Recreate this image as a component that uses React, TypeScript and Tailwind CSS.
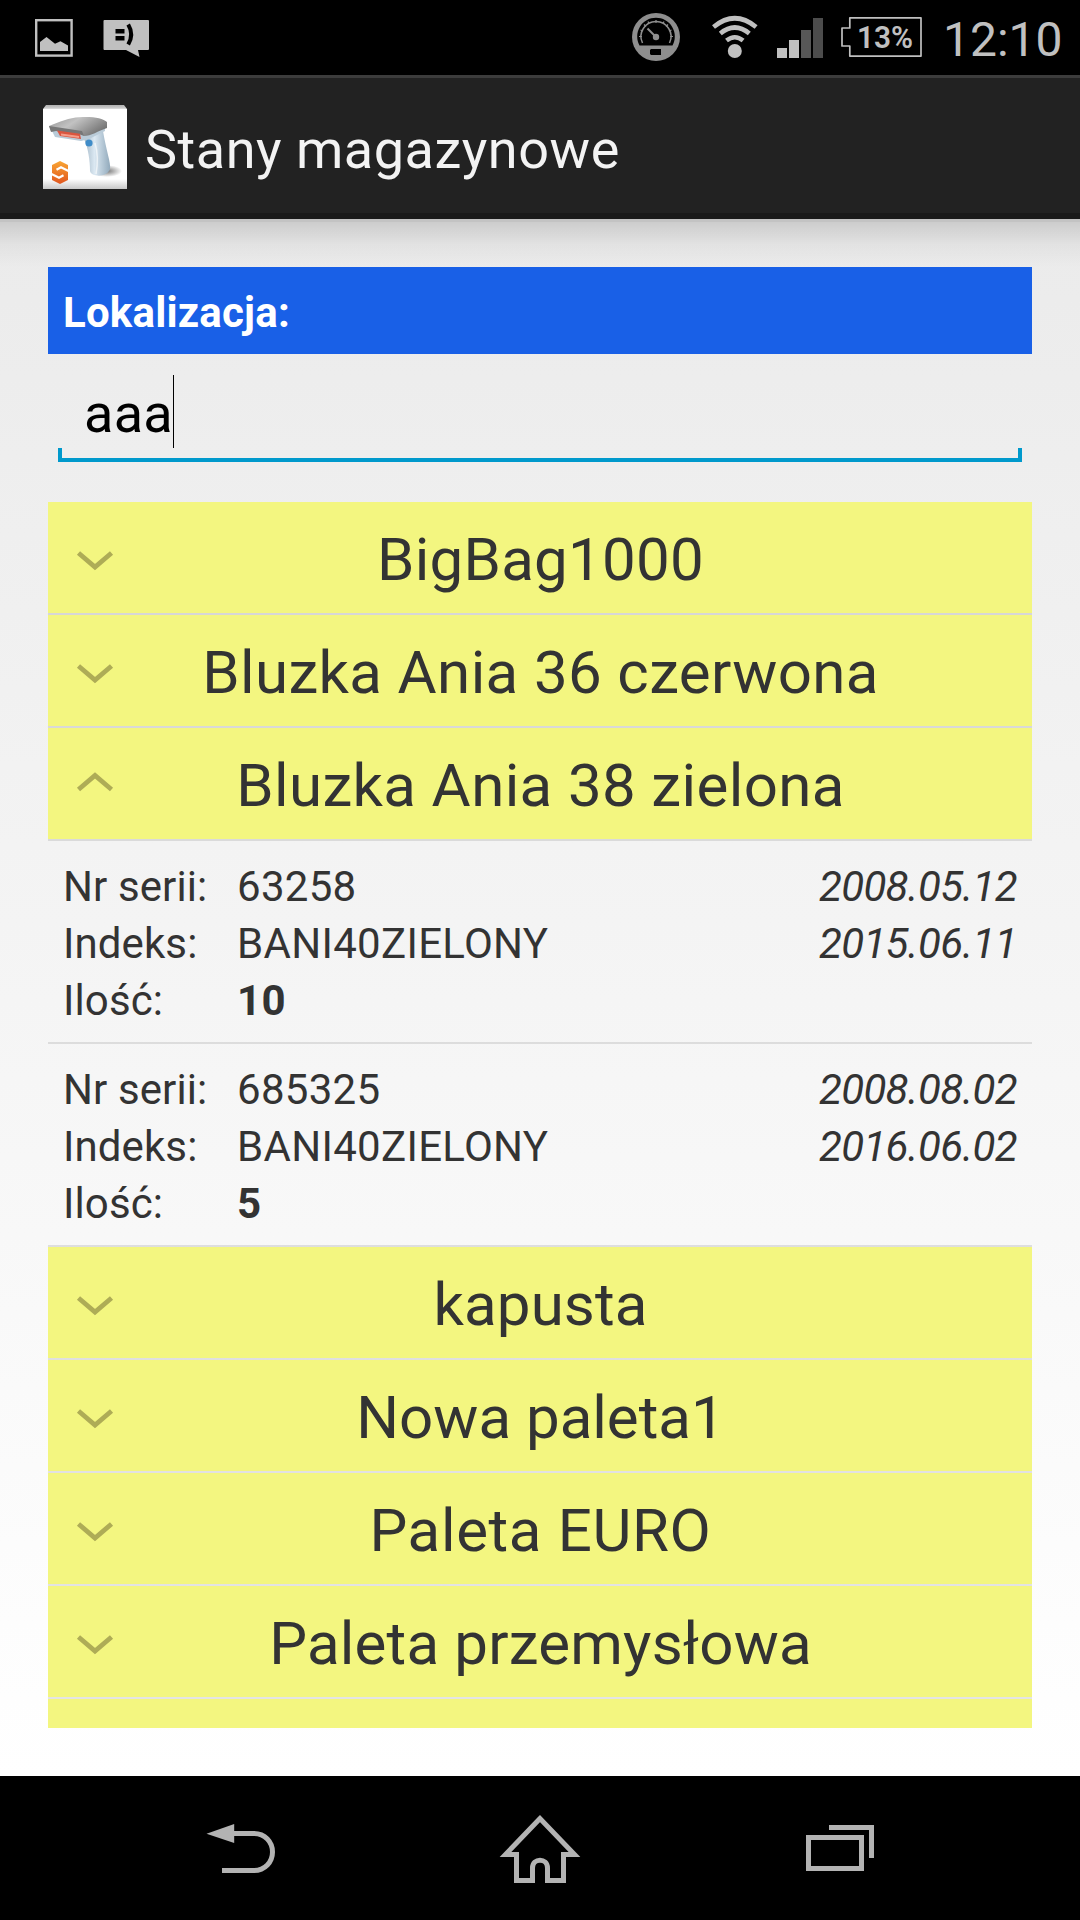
import type { ReactNode } from 'react'

type Seria = { nr: string; indeks: string; ilosc: number; od: string; do: string }
type Towar = { nazwa: string; tracking?: string; serie?: Seria[] }

const towary: Towar[] = [
  { nazwa: 'BigBag1000', tracking: 'tracking-[0.25px]' },
  { nazwa: 'Bluzka Ania 36 czerwona', tracking: 'tracking-[0.38px]' },
  {
    nazwa: 'Bluzka Ania 38 zielona',
    tracking: 'tracking-[0.38px]',
    serie: [
      { nr: '63258', indeks: 'BANI40ZIELONY', ilosc: 10, od: '2008.05.12', do: '2015.06.11' },
      { nr: '685325', indeks: 'BANI40ZIELONY', ilosc: 5, od: '2008.08.02', do: '2016.06.02' },
    ],
  },
  { nazwa: 'kapusta', tracking: 'tracking-[0.15px]' },
  { nazwa: 'Nowa paleta1' },
  { nazwa: 'Paleta EURO', tracking: 'tracking-[0.65px]' },
  { nazwa: 'Paleta przemysłowa', tracking: 'tracking-[0.2px]' },
]

function StatusBar() {
  return (
    <div className="flex h-[75px] shrink-0 items-center justify-between bg-black">
      <svg className="h-[75px] w-[160px]" viewBox="0 0 160 75" fill="#c0c0c0">
        <rect x="36.2" y="20.2" width="35.4" height="35.4" fill="none" stroke="#c0c0c0" strokeWidth="2.4" />
        <path d="M40 51V42L46.5 37L55 43.7L60.5 41.3L68 45.5V51Z" />
        <path d="M104.5 20H148a1 1 0 0 1 1 1V49a1 1 0 0 1-1 1H138L139.5 57L126 50H104.5a1 1 0 0 1-1-1V21a1 1 0 0 1 1-1Z" />
        <path d="M115.5 29h9v4.5h-9zM115.5 36h9v4.5h-9z" fill="#000" />
        <path d="M128.2 24.5Q134.2 34.5 128.2 44.5" fill="none" stroke="#000" strokeWidth="4" />
      </svg>
      <div className="flex items-center">
        <svg className="h-[75px] w-[325px]" viewBox="620 0 325 75">
          {/* speedometer */}
          <circle cx="656" cy="37" r="24" fill="#8e8e8e" />
          <path d="M639.5 45.5A18.8 18.8 0 1 1 672.5 45.5Z" fill="#000" />
          <path d="M642.5 43A15 15 0 1 1 669.5 43" fill="none" stroke="#8e8e8e" strokeWidth="1.5" />
          <path d="M639 36.5h3M673 36.5h-3M656 20v3M644 24.5l2 2.2M668 24.5l-2 2.2M648 21.5l1 2M664 21.5l-1 2M640.5 30l2.5 1M671.5 30l-2.5 1" stroke="#8e8e8e" strokeWidth="1.2" />
          <circle cx="656" cy="37" r="3.2" fill="#8e8e8e" />
          <path d="M647.5 28.5L656 37" stroke="#8e8e8e" strokeWidth="2" />
          <path d="M651 49h10v6h-10l-1-1v-4z" fill="#000" />
          {/* wifi */}
          <circle cx="734.8" cy="51" r="7" fill="#c0c0c0" />
          <path d="M713.5 27Q734.8 9.5 756.1 27M720.3 33.5Q734.8 21.5 749.3 33.5M726.5 40.5Q734.8 34 743.1 40.5" fill="none" stroke="#c0c0c0" strokeWidth="4.6" />
          {/* signal */}
          <path d="M777 48h10v10h-10zM789 40h10v18h-10z" fill="#c0c0c0" />
          <path d="M801 30h10v28h-10z" fill="#575757" />
          <path d="M813 18h10v40h-10z" fill="#4c4c4c" />
          {/* battery */}
          <path d="M849.8 17.9H921V56.1H849.8V46H842V28H849.8Z" fill="none" stroke="#c0c0c0" strokeWidth="1.7" strokeLinejoin="round" />
          <text x="857" y="48" fontSize="31" fontWeight="600" textLength="56" lengthAdjust="spacingAndGlyphs" fill="#c0c0c0">13%</text>
        </svg>
        <span className="mt-[3px] w-[135px] -indent-[2px] text-[48px] leading-[75px] text-[#c0c0c0]">12:10</span>
      </div>
    </div>
  )
}

function AppIcon() {
  return (
    <svg className="mt-0.5 h-[84px] w-[84px] shrink-0" viewBox="0 0 84 84">
      <defs>
        <linearGradient id="tlo" x1="0" y1="0" x2="0" y2="1">
          <stop offset="0" stopColor="#b0b0b0" />
          <stop offset="0.04" stopColor="#cfcfcf" />
          <stop offset="0.05" stopColor="#fff" />
          <stop offset="0.88" stopColor="#fff" />
          <stop offset="1" stopColor="#c8c8c8" />
        </linearGradient>
        <linearGradient id="glowica" x1="0" y1="0" x2="1" y2="0.5">
          <stop offset="0" stopColor="#949494" />
          <stop offset="0.45" stopColor="#c2c2c2" />
          <stop offset="1" stopColor="#777" />
        </linearGradient>
        <linearGradient id="uchwyt" x1="0" y1="0" x2="1" y2="0">
          <stop offset="0" stopColor="#a4b8c7" />
          <stop offset="0.4" stopColor="#dbe8f2" />
          <stop offset="1" stopColor="#92aabc" />
        </linearGradient>
        <linearGradient id="logo" x1="0" y1="0" x2="0" y2="1">
          <stop offset="0" stopColor="#f9a533" />
          <stop offset="1" stopColor="#e0561f" />
        </linearGradient>
        <radialGradient id="cien">
          <stop offset="0" stopColor="#777" />
          <stop offset="1" stopColor="#777" stopOpacity="0" />
        </radialGradient>
      </defs>
      <path d="M3 0H81L84 4V84H0V4Z" fill="url(#tlo)" />
      <ellipse cx="64" cy="66" rx="15" ry="6" fill="url(#cien)" />
      <path d="M41 34C45 42 47 56 47 66C48 72 64 73 67 64C68 58 63 45 60 26Z" fill="url(#uchwyt)" />
      <path d="M52 38C55 48 55 58 53 69" fill="none" stroke="#fff" strokeOpacity="0.6" strokeWidth="1.5" />
      <path d="M8 24L12 32L38 36L46 34L62 26V21Z" fill="#b9cbd8" />
      <path d="M6 21C16 17 27 12.5 36 12.3C48 11 60 13 64 17V23C55 26 48 31 41 31L38 28L13 25L8 26Z" fill="url(#glowica)" />
      <path d="M6 21L39 26L41 31L37 29.5L13 26L8 27Z" fill="#777" />
      <path d="M14 25.5L37 28.8L38 34L17 31Z" fill="#d9553f" />
      <path d="M18 29.5L36 32" stroke="#f59c88" strokeWidth="2" />
      <circle cx="46" cy="38" r="3.6" fill="#3f8cc8" />
      <path d="M17 56L25 60V75L17 79L9 75V60Z" fill="url(#logo)" />
      <path d="M26 66.3L18 62.3L13.5 64.8M8 68.7L16 72.7L20.5 70.2" fill="none" stroke="#fff" strokeWidth="2.2" />
    </svg>
  )
}

function Strzalka({ otwarta }: { otwarta: boolean }) {
  return (
    <svg className="absolute left-[28px] top-[40px] h-8 w-10" viewBox="0 0 40 32" fill="none" stroke="#aeac56" strokeWidth="4.8">
      <path d={otwarta ? 'M2.5 21.5L19 7.5L35.5 21.5' : 'M2.5 11L19 25L35.5 11'} />
    </svg>
  )
}

function Wiersz({ etykieta, wartosc, data }: { etykieta: string; wartosc: ReactNode; data?: string }) {
  return (
    <div className="flex h-[57px] items-center">
      <span className="w-[174px] tracking-[0.1px]">{etykieta}</span>
      <span className="flex-1 tracking-[0.3px]">{wartosc}</span>
      {data && <span className="italic tracking-[-0.65px]">{data}</span>}
    </div>
  )
}

function NavBar() {
  return (
    <nav className="h-[144px] shrink-0 bg-black">
      <svg className="h-[144px] w-[1080px]" viewBox="0 1776 1080 144" fill="none" stroke="#b3b3b3" strokeWidth="5">
        <path d="M233 1833.5H254C265 1833.5 272.5 1842 272.5 1852S265 1870.5 254 1870.5H222" />
        <path d="M206.5 1833.7L234.2 1824V1843Z" fill="#b3b3b3" stroke="none" />
        <path d="M540 1818.5L505.5 1854.5H516.5V1880.5H532.5V1868C532.5 1857.5 547.5 1857.5 547.5 1868V1880.5H563.5V1854.5H574.5Z" />
        <rect x="808.5" y="1837.5" width="53" height="31" />
        <path d="M829 1827.5H871.5V1858" />
      </svg>
    </nav>
  )
}

export default function App() {
  return (
    <div className="flex h-[1920px] w-[1080px] flex-col overflow-hidden bg-black font-[Roboto,sans-serif] text-[#333]">
      <StatusBar />
      <header className="flex h-[144px] shrink-0 items-center gap-[18px] border-b-[6px] border-t-[3px] border-b-[#1a1a1a] border-t-[#3c3c3c] bg-[#222] pl-[43px]">
        <AppIcon />
        <h1 className="mt-2 text-[54px] leading-none tracking-[0.52px] text-[#f3f3f3]">Stany magazynowe</h1>
      </header>

      <main className="flex h-[1557px] shrink-0 flex-col bg-linear-to-b from-[#ebebeb] to-white px-12 pb-12">
        <div className="-mx-12 h-[3px] shrink-0 bg-black/17" />
        <div className="-mx-12 h-[45px] shrink-0 bg-linear-to-b from-black/13 via-black/4 to-transparent" />
        <div className="flex h-[87px] shrink-0 items-center bg-[#1960e7] pl-[15px] pt-1 text-[42px] font-bold tracking-[0.2px] text-white">Lokalizacja:</div>
        <div className="mx-[10px] flex h-[108px] shrink-0 flex-col justify-end">
          <div className="flex h-[73px] items-center pl-[26px]">
            <span className="mt-[5px] text-[54px] leading-none tracking-[0.3px] text-black">aaa</span>
            <span className="h-[73px] w-px bg-black" />
          </div>
          <div className="h-[14px] shrink-0 border-x-4 border-b-4 border-[#0099cc]" />
        </div>

        {/* LISTA TOWARÓW */}
        <div className="mt-10 h-[1226px] shrink-0 overflow-hidden">
          {towary.map((t) => (
            <div key={t.nazwa}>
              <div className="relative h-[113px] border-b-2 border-black/10 bg-[#f3f680] bg-clip-padding pl-px text-center text-[60px] leading-[116px]">
                <Strzalka otwarta={!!t.serie} />
                <span className={t.tracking}>{t.nazwa}</span>
              </div>
              {t.serie?.map((s) => (
                <div key={s.nr} className="h-[203px] border-b-2 border-black/10 px-[15px] pt-[17px] text-[42px]">
                  <Wiersz etykieta="Nr serii:" wartosc={s.nr} data={s.od} />
                  <Wiersz etykieta="Indeks:" wartosc={s.indeks} data={s.do} />
                  <Wiersz etykieta="Ilość:" wartosc={<b>{s.ilosc}</b>} />
                </div>
              ))}
            </div>
          ))}
          <div className="h-[29px] bg-[#f3f680]" />
        </div>
      </main>
      <NavBar />
    </div>
  )
}
